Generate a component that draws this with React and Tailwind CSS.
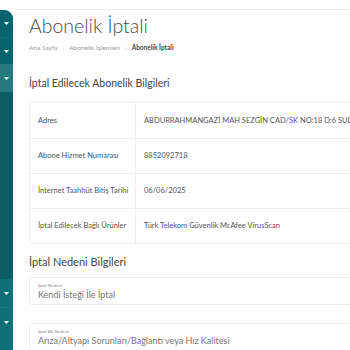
import { useState } from 'react'

const rows = [
  { label: 'Adres', value: 'ABDURRAHMANGAZİ MAH SEZGİN CAD/SK NO:18 D:6 SULTANBEYLİ / İSTANBUL' },
  { label: 'Abone Hizmet Numarası', value: '8852092718' },
  { label: 'İnternet Taahhüt Bitiş Tarihi', value: '06/06/2025' },
  { label: 'İptal Edilecek Bağlı Ürünler', value: 'Türk Telekom Güvenlik McAfee VirusScan' },
]

function Caret() {
  return (
    <svg width="5" height="3" viewBox="0 0 5 3" className="ml-[4px]">
      <path d="M0 0h5L2.5 3z" fill="#ffffff" />
    </svg>
  )
}

function Sidebar() {
  return (
    <aside className="mt-[10px] flex w-[13px] shrink-0 flex-col overflow-hidden rounded-tr-[9px] bg-[#0b5b63]">
      <div className="flex h-[27px] items-center bg-[#07646c]">
        <Caret />
      </div>
      <div className="flex h-[27px] items-center border-t border-[#0f6f76] bg-[#07646c]">
        <Caret />
      </div>
      <div className="flex h-[28px] items-center bg-[#27797f]">
        <Caret />
      </div>
      <div className="h-[187px] bg-[#0b5b63]" />
      <div className="flex h-[28px] items-center bg-[#0e6f78]">
        <Caret />
      </div>
      <div className="flex h-[29px] items-center border-t border-[#17767e] bg-[#0e6f78]">
        <Caret />
      </div>
      <div className="flex-1 bg-[#0e6f78]" />
    </aside>
  )
}

function App() {
  const [reason] = useState('Kendi İsteği İle İptal')

  return (
    <div className="flex h-[350px] w-[350px] overflow-hidden bg-white font-['Lato','Open_Sans',sans-serif]">
      <Sidebar />
      <main className="min-w-0 flex-1 overflow-hidden">
        <div className="ml-[2px] h-[10px] border-b border-[#eeeeee]" />
        <div className="pl-[16px]">
          <h1 className="mt-[3px] text-[19.5px] leading-[26px] font-light text-[#4a4a4a]">Abonelik İptali</h1>
          <nav className="mt-[4px] flex items-center gap-[5px] text-[6.5px] leading-[9px] text-[#9a9a9a]">
            <span>Ana Sayfa</span>
            <span className="text-[#bbbbbb]">›</span>
            <span>Abonelik İşlemleri</span>
            <span className="text-[#bbbbbb]">›</span>
            <span className="font-bold text-[#444444]">Abonelik İptali</span>
          </nav>

          <h2 className="mt-[23px] text-[10.5px] leading-[16px] text-[#444444]">
            İptal Edilecek Abonelik Bilgileri
          </h2>

          <div className="mt-[11px] w-[360px] rounded-[3px] border border-[#f0f0f0] bg-white shadow-[0_0_4px_rgba(0,0,0,0.04)]">
            {rows.map((row, index) => (
              <div
                key={row.label}
                className={`flex h-[35px] items-center text-[7.5px] text-[#555555] ${index > 0 ? 'border-t border-[#efefef]' : ''}`}
              >
                <div className="flex h-full w-[106px] shrink-0 items-center border-r border-[#efefef] pl-[8px]">
                  {row.label}
                </div>
                <div className="whitespace-nowrap pl-[8px]">{row.value}</div>
              </div>
            ))}
          </div>

          <h2 className="mt-[10px] text-[11px] leading-[16px] text-[#444444]">İptal Nedeni Bilgileri</h2>

          <div className="mt-[7px] flex h-[28px] w-[360px] flex-col justify-center rounded-[3px] border border-[#eeeeee] pl-[8px]">
            <span className="text-[4.5px] leading-[6px] text-[#888888]">İptal Nedeni</span>
            <span className="text-[9px] leading-[11px] text-[#777777]">{reason}</span>
          </div>

          <div className="mt-[18px] flex h-[28px] w-[360px] flex-col justify-center rounded-[3px] border border-[#eeeeee] pl-[8px]">
            <span className="text-[4.5px] leading-[6px] text-[#888888]">İptal Alt Nedeni</span>
            <span className="text-[9px] leading-[11px] text-[#777777]">
              Arıza/Altyapı Sorunları/Bağlantı veya Hız Kalitesi
            </span>
          </div>
        </div>
      </main>
    </div>
  )
}

export default App
